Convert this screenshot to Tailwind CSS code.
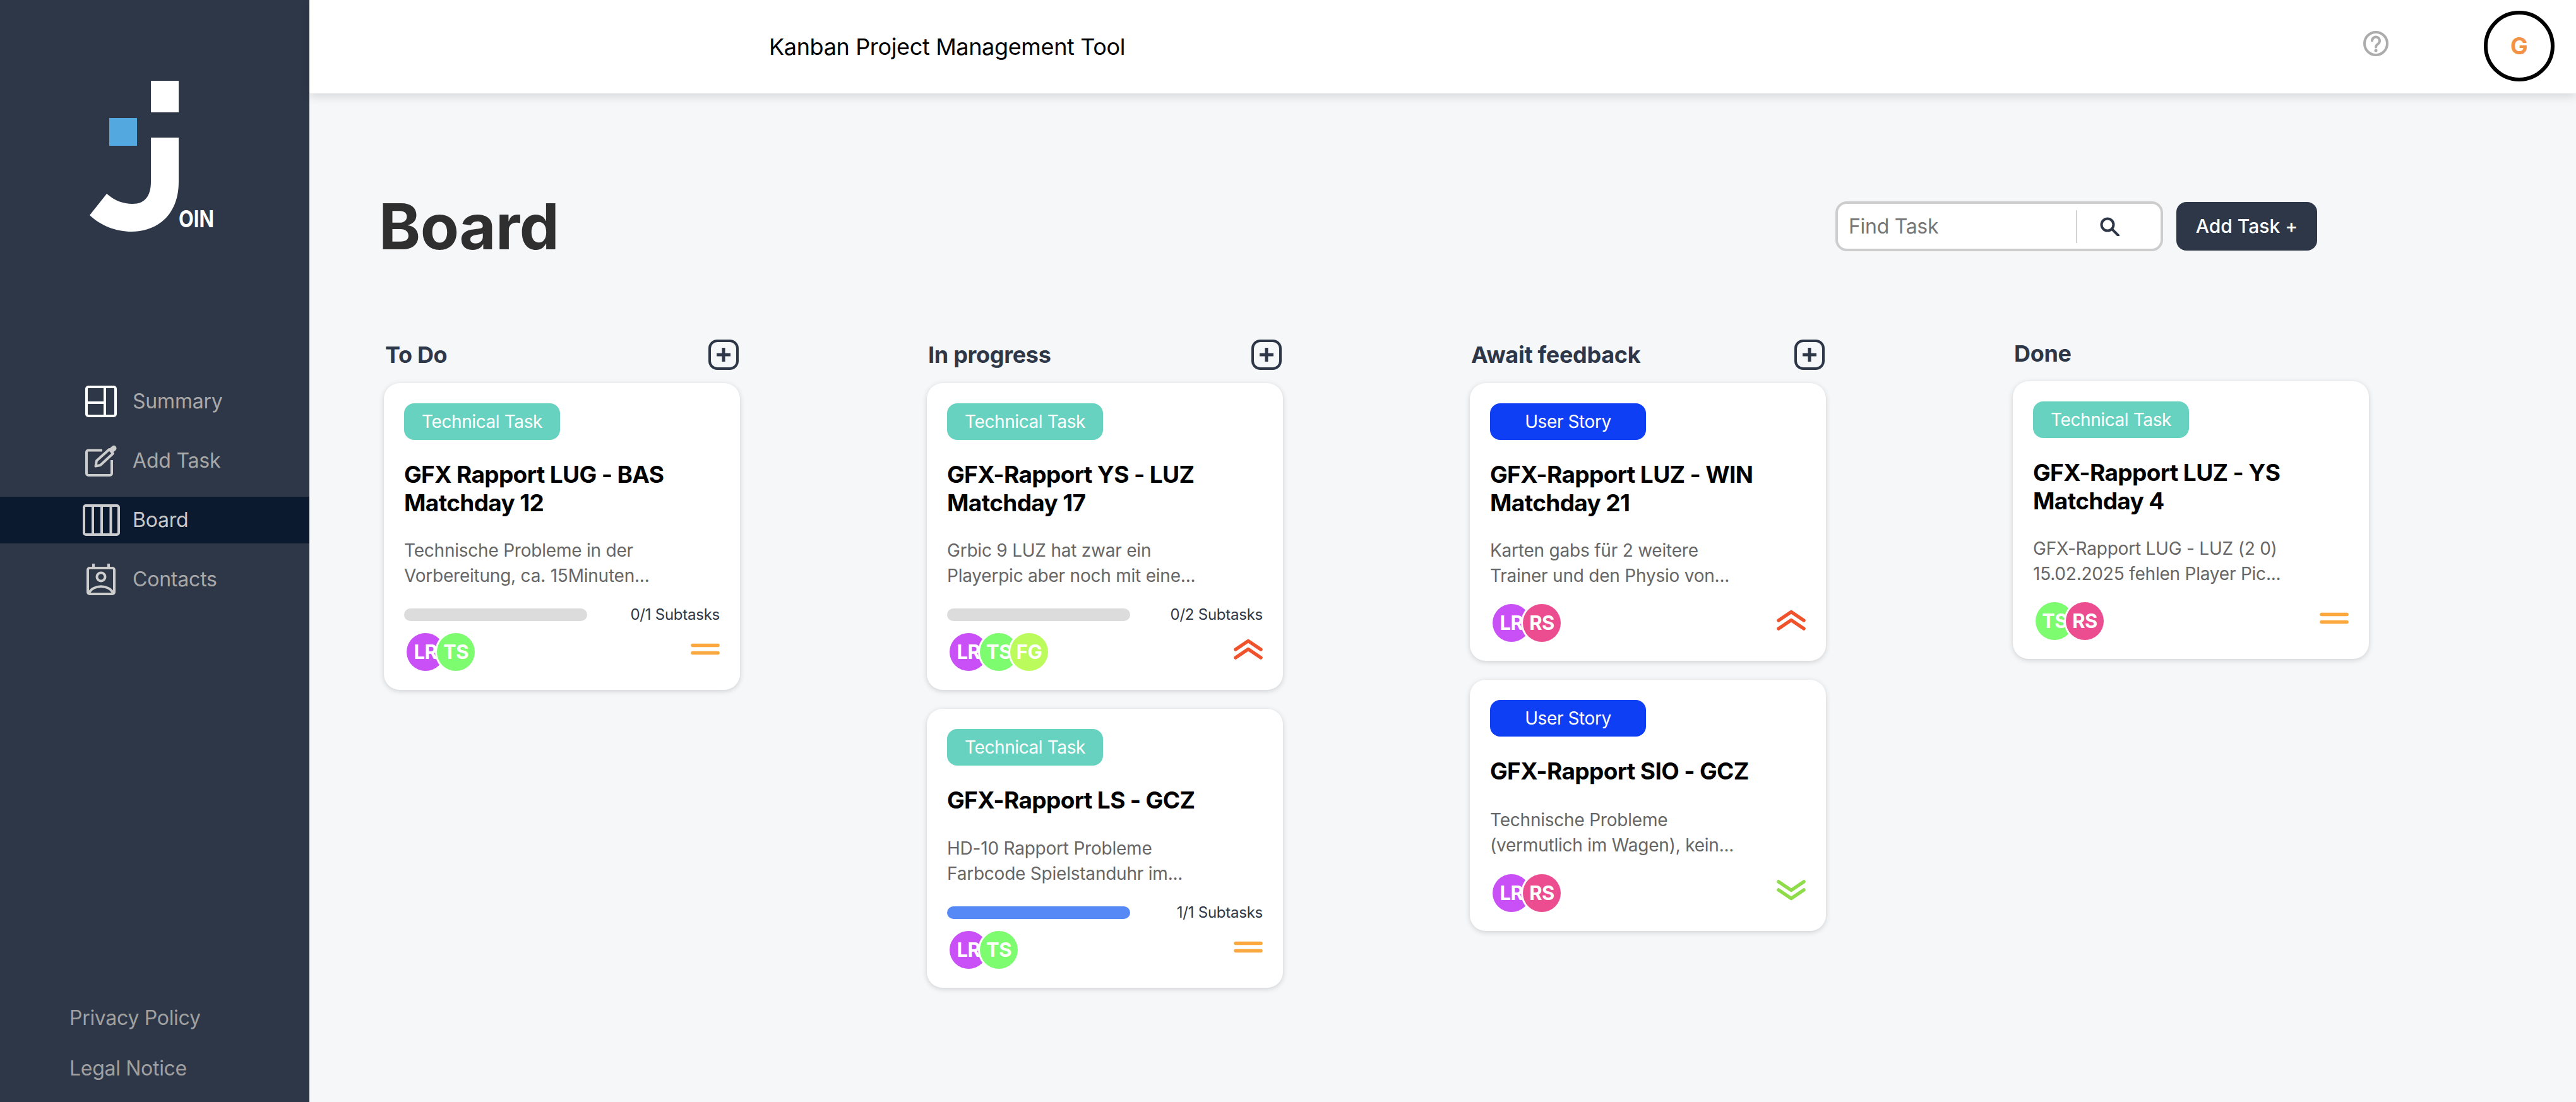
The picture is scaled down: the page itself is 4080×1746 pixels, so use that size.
<!DOCTYPE html>
<html lang="en">
<head>
<meta charset="utf-8">
<title>Kanban Project Management Tool</title>
<script src="https://cdn.jsdelivr.net/npm/@tailwindcss/browser@4"></script>
</head>
<body class="m-0 bg-[#f6f7f9] font-[Inter,sans-serif]">
<div class="flex h-[1746px] w-[4080px] overflow-hidden">
  <aside class="flex h-full w-[490px] shrink-0 flex-col bg-[#2d3748]">
    <svg class="ml-[140px] mt-[126px] h-[245px] w-[210px]" viewBox="140 126 210 245">
      <rect x="239" y="128" width="44" height="50" fill="#fff"/>
      <rect x="173" y="187" width="44" height="44" fill="#53a8e0"/>
      <path d="M239 218H283V288C283 340 250 367 208 367C185 367 160 358 142 341L169 307C182 318 195 323 210 323C230 323 239 310 239 288Z" fill="#fff"/>
      <text x="283" y="360" font-family="Inter" font-weight="700" font-size="37" fill="#fff" textLength="56" lengthAdjust="spacingAndGlyphs">OIN</text>
    </svg>
    <nav class="mt-[228px] flex flex-col gap-[20px] text-[32px] tracking-[-0.2px] text-[#a8a8a8]">
      <a class="flex h-[74px] items-center pl-[130px]">
        <span class="flex w-[60px] justify-center">
          <svg class="h-[50px] w-[50px]" viewBox="0 0 50 50" fill="none" stroke="#fff" stroke-width="4"><rect x="2" y="2" width="46" height="46" rx="3"/><path d="M31 2V48M2 27H31"/></svg>
        </span>
        <span class="ml-[20px]">Summary</span>
      </a>
      <a class="flex h-[74px] items-center pl-[130px]">
        <span class="flex w-[60px] justify-center">
          <svg class="h-[50px] w-[50px]" viewBox="0 0 50 50" fill="none" stroke="#cdcdcd" stroke-width="4"><path d="M27 8.500H5a3 3 0 0 0-3 3V45a3 3 0 0 0 3 3H39a3 3 0 0 0 3-3V24"/><path d="M16.500 33.500L18 25L38 7L44 13.500L24 32Z" stroke-linejoin="round"/><path d="M38 6L43 1.500Q46 0 48 2L49 3.500Q50.500 6 48 8.500L44 12Z" fill="#cdcdcd" stroke="none"/></svg>
        </span>
        <span class="ml-[20px]">Add Task</span>
      </a>
      <a class="flex h-[74px] items-center bg-[#0c1a30] pl-[130px] text-[#c8c8c8]">
        <span class="flex w-[60px] justify-center">
          <svg class="h-[50px] w-[59px]" viewBox="0 0 59 50" fill="none" stroke="#cdcdcd" stroke-width="4"><rect x="2" y="2" width="55" height="46" rx="3"/><path d="M16 2V48M30 2V48M44.500 2V48"/></svg>
        </span>
        <span class="ml-[20px]">Board</span>
      </a>
      <a class="flex h-[74px] items-center pl-[130px]">
        <span class="flex w-[60px] justify-center">
          <svg class="h-[50px] w-[46px]" viewBox="0 0 46 50" fill="none" stroke="#cdcdcd" stroke-width="4"><rect x="2" y="7" width="42" height="41" rx="3"/><path d="M11 0V7M35 0V7" /><circle cx="23" cy="21" r="6.500"/><path d="M4 46C11 33 35 33 42 46" /></svg>
        </span>
        <span class="ml-[20px]">Contacts</span>
      </a>
    </nav>
    <div class="mt-auto flex flex-col gap-[36px] pb-[31px] pl-[110px] text-[32px] leading-[44px] tracking-[-0.3px] text-[#a0a0a0]">
      <a>Privacy Policy</a>
      <a>Legal Notice</a>
    </div>
  </aside>

  <main class="flex min-w-0 flex-1 flex-col">
    <header class="relative flex h-[148px] shrink-0 items-center bg-white pl-[728px] pr-[34px] shadow-[0_5px_14px_rgba(0,0,0,0.13)]">
      <span class="text-[36px] tracking-[-0.35px] text-black">Kanban Project Management Tool</span>
      <svg class="mb-[10px] ml-auto h-[40px] w-[40px]" viewBox="0 0 40 40" fill="none" stroke="#acacac" stroke-width="4"><circle cx="20" cy="20" r="18"/><path d="M14 15.500a6 6 0 1 1 9.500 5c-2.500 1.800-3.500 2.700-3.500 5" stroke-linecap="round"/><circle cx="20" cy="31" r="2.500" fill="#acacac" stroke="none"/></svg>
      <div class="mb-[3px] ml-[151px] flex h-[112px] w-[112px] items-center justify-center rounded-full border-[6px] border-black bg-white text-[37px] font-bold text-[#f39244]">G</div>
    </header>

    <div class="w-[3180px] pl-[110px] pt-[171px]">
      <div class="flex h-[79px] items-center">
        <h1 class="text-[100px] font-bold tracking-[-0.5px] text-[#2f2f2f]">Board</h1>
        <div class="ml-auto flex h-[79px] w-[519px] items-center rounded-[18px] border-4 border-[#cdcdcd] bg-white">
          <input class="h-full w-[377px] bg-transparent pl-[17px] text-[32px] tracking-[-0.3px] outline-none placeholder:text-[#757575]" placeholder="Find Task">
          <span class="h-[52px] w-[2px] bg-[#d4d4d4]"></span>
          <svg class="ml-[36px] h-[30px] w-[32px]" viewBox="0 0 32 30" fill="none" stroke="#2d3748" stroke-width="4"><circle cx="12" cy="12" r="9.500"/><path d="M19 19L29 29" stroke-linecap="round"/></svg>
        </div>
        <button class="ml-[21px] h-[77px] w-[223px] rounded-[16px] bg-[#2d3748] text-[30px] font-medium text-white">Add Task +</button>
      </div>
    </div>

    <div class="mt-[140px] flex gap-[296px] pl-[118px]">
      <!-- To Do -->
      <section class="w-[564px]">
        <div class="mb-[21px] flex h-[48px] items-center justify-between pl-[2px] pr-[2px]">
          <h2 class="text-[36px] font-bold leading-[45px] tracking-[-0.3px] text-[#2d3748]">To Do</h2>
          <svg class="h-[48px] w-[48px]" viewBox="0 0 48 48" fill="none" stroke="#2d3748" stroke-width="4"><rect x="2" y="2" width="44" height="44" rx="12"/><path d="M24 13V35M13 24H35" stroke-width="5"/></svg>
        </div>
        <article class="rounded-[25px] bg-white px-[32px] pb-[30px] pt-[32px] shadow-[0_2px_8px_rgba(0,0,0,0.16)]">
          <div class="flex h-[58px] w-[247px] items-center justify-center rounded-[16px] bg-[#67d2c0] text-[28px] tracking-[-0.4px] text-white">Technical Task</div>
          <h3 class="mt-[32px] text-[37px] font-bold leading-[45px] tracking-[-0.65px] text-black">GFX Rapport LUG - BAS<br>Matchday 12</h3>
          <p class="mt-[33px] whitespace-nowrap text-[28px] leading-[40px] tracking-[-0.22px] text-[#666]">Technische Probleme in der<br>Vorbereitung, ca. 15Minuten...</p>
          <div class="mt-[26px] flex h-[32px] items-center justify-between">
            <div class="h-[20px] w-[290px] rounded-full bg-[#dcdcdc]"></div>
            <span class="text-[24px] tracking-[-0.25px] text-[#2d3748]">0/1 Subtasks</span>
          </div>
          <div class="mt-[13px] flex items-center justify-between">
            <div class="ml-[4px] flex text-[31px] font-bold tracking-[-0.5px] text-white">
              <span class="relative flex h-[60px] w-[60px] items-center justify-center rounded-full bg-[#c94ff7] ring-[3px] ring-white">LR</span>
              <span class="relative -ml-[12px] flex h-[60px] w-[60px] items-center justify-center rounded-full bg-[#7dfc70] ring-[3px] ring-white">TS</span>
            </div>
            <svg class="mb-[10px] h-[33px] w-[46px]" viewBox="0 0 46 33" fill="none" stroke="#fba93f" stroke-width="5.500" stroke-linecap="round"><path d="M3 10.500H43M3 22.500H43"/></svg>
          </div>
        </article>
      </section>

      <!-- In progress -->
      <section class="w-[564px]">
        <div class="mb-[21px] flex h-[48px] items-center justify-between pl-[2px] pr-[2px]">
          <h2 class="text-[36px] font-bold leading-[45px] tracking-[-0.3px] text-[#2d3748]">In progress</h2>
          <svg class="h-[48px] w-[48px]" viewBox="0 0 48 48" fill="none" stroke="#2d3748" stroke-width="4"><rect x="2" y="2" width="44" height="44" rx="12"/><path d="M24 13V35M13 24H35" stroke-width="5"/></svg>
        </div>
        <div class="flex flex-col gap-[30px]">
          <article class="rounded-[25px] bg-white px-[32px] pb-[30px] pt-[32px] shadow-[0_2px_8px_rgba(0,0,0,0.16)]">
            <div class="flex h-[58px] w-[247px] items-center justify-center rounded-[16px] bg-[#67d2c0] text-[28px] tracking-[-0.4px] text-white">Technical Task</div>
            <h3 class="mt-[32px] text-[37px] font-bold leading-[45px] tracking-[-0.65px] text-black">GFX-Rapport YS - LUZ<br>Matchday 17</h3>
            <p class="mt-[33px] whitespace-nowrap text-[28px] leading-[40px] tracking-[-0.22px] text-[#666]">Grbic 9 LUZ hat zwar ein<br>Playerpic aber noch mit eine...</p>
            <div class="mt-[26px] flex h-[32px] items-center justify-between">
              <div class="h-[20px] w-[290px] rounded-full bg-[#dcdcdc]"></div>
              <span class="text-[24px] tracking-[-0.25px] text-[#2d3748]">0/2 Subtasks</span>
            </div>
            <div class="mt-[13px] flex items-center justify-between">
              <div class="ml-[4px] flex text-[31px] font-bold tracking-[-0.5px] text-white">
                <span class="relative flex h-[60px] w-[60px] items-center justify-center rounded-full bg-[#c94ff7] ring-[3px] ring-white">LR</span>
                <span class="relative -ml-[12px] flex h-[60px] w-[60px] items-center justify-center rounded-full bg-[#7dfc70] ring-[3px] ring-white">TS</span>
                <span class="relative -ml-[12px] flex h-[60px] w-[60px] items-center justify-center rounded-full bg-[#bcfb5c] ring-[3px] ring-white">FG</span>
              </div>
              <svg class="mb-[10px] h-[33px] w-[46px]" viewBox="0 0 46 33" fill="none" stroke="#f0522c" stroke-width="5.500" stroke-linecap="round" stroke-linejoin="round"><path d="M3 17L23 3.500L43 17M3 30L23 16.500L43 30"/></svg>
            </div>
          </article>
          <article class="rounded-[25px] bg-white px-[32px] pb-[30px] pt-[32px] shadow-[0_2px_8px_rgba(0,0,0,0.16)]">
            <div class="flex h-[58px] w-[247px] items-center justify-center rounded-[16px] bg-[#67d2c0] text-[28px] tracking-[-0.4px] text-white">Technical Task</div>
            <h3 class="mt-[32px] text-[37px] font-bold leading-[45px] tracking-[-0.65px] text-black">GFX-Rapport LS - GCZ</h3>
            <p class="mt-[34px] whitespace-nowrap text-[28px] leading-[40px] tracking-[-0.22px] text-[#666]">HD-10 Rapport Probleme<br>Farbcode Spielstanduhr im...</p>
            <div class="mt-[26px] flex h-[32px] items-center justify-between">
              <div class="h-[20px] w-[290px] rounded-full bg-[#5689f5]"></div>
              <span class="text-[24px] tracking-[-0.25px] text-[#2d3748]">1/1 Subtasks</span>
            </div>
            <div class="mt-[13px] flex items-center justify-between">
              <div class="ml-[4px] flex text-[31px] font-bold tracking-[-0.5px] text-white">
                <span class="relative flex h-[60px] w-[60px] items-center justify-center rounded-full bg-[#c94ff7] ring-[3px] ring-white">LR</span>
                <span class="relative -ml-[12px] flex h-[60px] w-[60px] items-center justify-center rounded-full bg-[#7dfc70] ring-[3px] ring-white">TS</span>
              </div>
              <svg class="mb-[10px] h-[33px] w-[46px]" viewBox="0 0 46 33" fill="none" stroke="#fba93f" stroke-width="5.500" stroke-linecap="round"><path d="M3 10.500H43M3 22.500H43"/></svg>
            </div>
          </article>
        </div>
      </section>

      <!-- Await feedback -->
      <section class="w-[564px]">
        <div class="mb-[21px] flex h-[48px] items-center justify-between pl-[2px] pr-[2px]">
          <h2 class="text-[36px] font-bold leading-[45px] tracking-[-0.3px] text-[#2d3748]">Await feedback</h2>
          <svg class="h-[48px] w-[48px]" viewBox="0 0 48 48" fill="none" stroke="#2d3748" stroke-width="4"><rect x="2" y="2" width="44" height="44" rx="12"/><path d="M24 13V35M13 24H35" stroke-width="5"/></svg>
        </div>
        <div class="flex flex-col gap-[30px]">
          <article class="rounded-[25px] bg-white px-[32px] pb-[30px] pt-[32px] shadow-[0_2px_8px_rgba(0,0,0,0.16)]">
            <div class="flex h-[58px] w-[247px] items-center justify-center rounded-[16px] bg-[#0f3ff5] text-[28px] tracking-[-0.4px] text-white">User Story</div>
            <h3 class="mt-[32px] text-[37px] font-bold leading-[45px] tracking-[-0.65px] text-black">GFX-Rapport LUZ - WIN<br>Matchday 21</h3>
            <p class="mt-[33px] whitespace-nowrap text-[28px] leading-[40px] tracking-[-0.22px] text-[#666]">Karten gabs für 2 weitere<br>Trainer und den Physio von...</p>
            <div class="mt-[25px] flex items-center justify-between">
              <div class="ml-[4px] flex text-[31px] font-bold tracking-[-0.5px] text-white">
                <span class="relative flex h-[60px] w-[60px] items-center justify-center rounded-full bg-[#c94ff7] ring-[3px] ring-white">LR</span>
                <span class="relative -ml-[12px] flex h-[60px] w-[60px] items-center justify-center rounded-full bg-[#ec4d91] ring-[3px] ring-white">RS</span>
              </div>
              <svg class="mb-[10px] h-[33px] w-[46px]" viewBox="0 0 46 33" fill="none" stroke="#f0522c" stroke-width="5.500" stroke-linecap="round" stroke-linejoin="round"><path d="M3 17L23 3.500L43 17M3 30L23 16.500L43 30"/></svg>
            </div>
          </article>
          <article class="rounded-[25px] bg-white px-[32px] pb-[30px] pt-[32px] shadow-[0_2px_8px_rgba(0,0,0,0.16)]">
            <div class="flex h-[58px] w-[247px] items-center justify-center rounded-[16px] bg-[#0f3ff5] text-[28px] tracking-[-0.4px] text-white">User Story</div>
            <h3 class="mt-[32px] text-[37px] font-bold leading-[45px] tracking-[-0.65px] text-black">GFX-Rapport SIO - GCZ</h3>
            <p class="mt-[35px] whitespace-nowrap text-[28px] leading-[40px] tracking-[-0.22px] text-[#666]">Technische Probleme<br>(vermutlich im Wagen), kein...</p>
            <div class="mt-[26px] flex items-center justify-between">
              <div class="ml-[4px] flex text-[31px] font-bold tracking-[-0.5px] text-white">
                <span class="relative flex h-[60px] w-[60px] items-center justify-center rounded-full bg-[#c94ff7] ring-[3px] ring-white">LR</span>
                <span class="relative -ml-[12px] flex h-[60px] w-[60px] items-center justify-center rounded-full bg-[#ec4d91] ring-[3px] ring-white">RS</span>
              </div>
              <svg class="mb-[10px] h-[33px] w-[46px]" viewBox="0 0 46 33" fill="none" stroke="#8fdc4a" stroke-width="5.500" stroke-linecap="round" stroke-linejoin="round"><path d="M3 3L23 16.500L43 3M3 16L23 29.500L43 16"/></svg>
            </div>
          </article>
        </div>
      </section>

      <!-- Done -->
      <section class="w-[564px]">
        <h2 class="mb-[21px] pl-[2px] text-[36px] font-bold leading-[45px] tracking-[-0.3px] text-[#2d3748]">Done</h2>
        <article class="rounded-[25px] bg-white px-[32px] pb-[30px] pt-[32px] shadow-[0_2px_8px_rgba(0,0,0,0.16)]">
          <div class="flex h-[58px] w-[247px] items-center justify-center rounded-[16px] bg-[#67d2c0] text-[28px] tracking-[-0.4px] text-white">Technical Task</div>
          <h3 class="mt-[32px] text-[37px] font-bold leading-[45px] tracking-[-0.65px] text-black">GFX-Rapport LUZ - YS<br>Matchday 4</h3>
          <p class="mt-[33px] whitespace-nowrap text-[28px] leading-[40px] tracking-[-0.22px] text-[#666]">GFX-Rapport LUG - LUZ (2 0)<br>15.02.2025 fehlen Player Pic...</p>
          <div class="mt-[25px] flex items-center justify-between">
            <div class="ml-[4px] flex text-[31px] font-bold tracking-[-0.5px] text-white">
              <span class="relative flex h-[60px] w-[60px] items-center justify-center rounded-full bg-[#7dfc70] ring-[3px] ring-white">TS</span>
              <span class="relative -ml-[12px] flex h-[60px] w-[60px] items-center justify-center rounded-full bg-[#ec4d91] ring-[3px] ring-white">RS</span>
            </div>
            <svg class="mb-[10px] h-[33px] w-[46px]" viewBox="0 0 46 33" fill="none" stroke="#fba93f" stroke-width="5.500" stroke-linecap="round"><path d="M3 10.500H43M3 22.500H43"/></svg>
          </div>
        </article>
      </section>
    </div>
  </main>
</div>
</body>
</html>
